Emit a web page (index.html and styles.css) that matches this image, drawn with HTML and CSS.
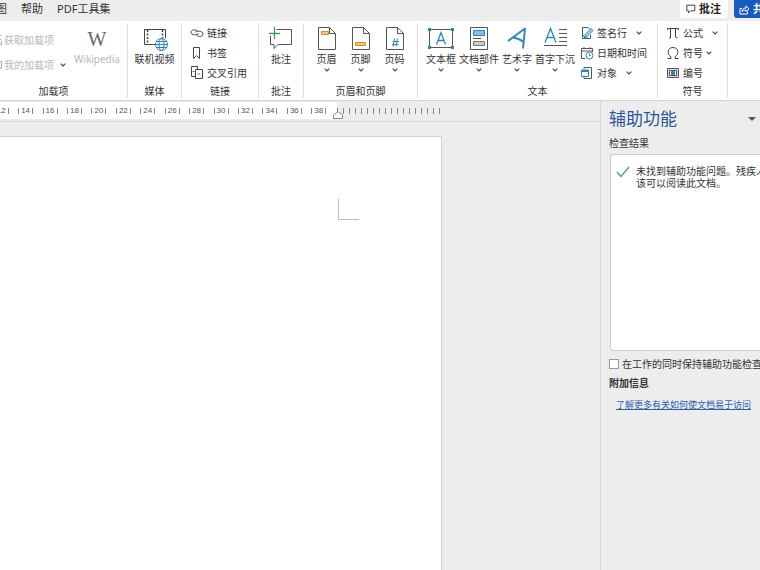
FILE: index.html
```html
<!DOCTYPE html>
<html lang="zh-CN">
<head>
<meta charset="utf-8">
<title>文档</title>
<link rel="stylesheet" href="styles.css">
</head>
<body>
<svg class="defs" aria-hidden="true">
  <symbol id="chev" viewBox="0 0 6 4"><path d="M.7 .7 3 3 5.300 .7" fill="none" stroke="#444" stroke-width="1.1"/></symbol>
</svg>
<header class="tabs">
  <nav class="tab-list">
    <a href="#view" class="tab-view">视图</a>
    <a href="#help">帮助</a>
    <a href="#pdf">PDF工具集</a>
  </nav>
  <button class="comments"><svg width="10" height="10" viewBox="0 0 10 10" fill="none" stroke="#444"><path d="M.8 1.2h8v5.6H4.6L2.6 8.8v-2H.8z"/></svg>批注</button>
  <button class="share"><svg width="11" height="11" viewBox="0 0 11 11" fill="none" stroke="#fff"><path d="M3 4.5H1v5.5h7.5V7.500M3 7.500c.3-2.500 1.500-3.500 4-3.500V1.800L10 5 7 7.500V6C5 6 4 6.500 3 7.500z"/></svg>共享</button>
</header>

<div class="ribbon">
  <section class="group g-addins">
    <div class="body">
      <div class="rows tall">
        <button class="cmd off"><svg class="cut" width="4" height="12" viewBox="0 0 4 12" fill="none" stroke="#aaa"><path d="M0 1.500h1.500M0 5.500h1M0 10.500h1.500V7"/></svg>获取加载项</button>
        <button class="cmd off"><svg class="cut" width="4" height="12" viewBox="0 0 4 12" fill="none" stroke="#aaa"><path d="M0 2.500h1.500v7H0"/></svg>我的加载项<svg class="chev far"><use href="#chev"/></svg></button>
      </div>
      <button class="big off"><span class="w">W</span>Wikipedia</button>
    </div>
    <h2>加载项</h2>
  </section>

  <section class="group g-media">
    <div class="body">
      <button class="big"><svg width="26" height="26" viewBox="0 0 26 26" fill="none" stroke="#444"><path d="M13 19.500H2.500v-15h21V13"/><path d="M5.500 5v14M20.500 5v8" stroke-dasharray="2 1.500" stroke-width="1.500"/><g stroke="#2787bd"><circle cx="19.500" cy="19.500" r="6" fill="#fff"/><ellipse cx="19.500" cy="19.500" rx="2.500" ry="6"/><path d="M13.500 19.500h12M14.500 16.500h10M14.500 22.500h10"/></g></svg>联机视频</button>
    </div>
    <h2>媒体</h2>
  </section>

  <section class="group g-links">
    <div class="body">
      <div class="rows">
        <button class="cmd"><svg width="14" height="14" viewBox="0 0 14 14" fill="none" stroke="#444"><path d="M8.500 7.200C8 9.500 1 9.500 1 6.500 1 3.500 5.500 3 7.200 5.200"/><path d="M5.300 6.500C6 4 13 5 13 8c0 3-4.500 3.200-6.300 1"/></svg>链接</button>
        <button class="cmd"><svg width="14" height="14" viewBox="0 0 14 14" fill="none" stroke="#444"><path d="M3.500 1.500h6v11l-3-3-3 3z"/></svg>书签</button>
        <button class="cmd"><svg width="14" height="14" viewBox="0 0 14 14" fill="none" stroke="#444"><path d="M5 10.500H1.500v-10h6V3"/><path d="M5.500 3.500h7v9h-7z" fill="#fff"/><path d="M2.500 5.500h2M7.500 8h3" stroke="#c4456d"/></svg>交叉引用</button>
      </div>
    </div>
    <h2>链接</h2>
  </section>

  <section class="group g-comment">
    <div class="body">
      <button class="big"><svg width="26" height="26" viewBox="0 0 26 26" fill="none" stroke="#555"><path d="M8.500 4.500h15v15H10l-4 4v-4H2.500V11"/><path d="M6.500 2v12M1 8.500h11" stroke="#35a35b" stroke-width="1.300"/></svg>批注</button>
    </div>
    <h2>批注</h2>
  </section>

  <section class="group g-header">
    <div class="body">
      <button class="big"><svg width="26" height="26" viewBox="0 0 26 26" fill="none" stroke="#555"><path d="M4.500 2.500h11l6 6v16h-17zM15.500 2.500v6h6"/><path d="M7.500 6.500h7v3h-7z" fill="#fbc86c" stroke="#d78b24"/></svg>页眉<svg class="chev"><use href="#chev"/></svg></button>
      <button class="big"><svg width="26" height="26" viewBox="0 0 26 26" fill="none" stroke="#555"><path d="M4.500 2.500h11l6 6v16h-17zM15.500 2.500v6h6"/><path d="M7.500 17.500h10v3h-10z" fill="#fbc86c" stroke="#d78b24"/></svg>页脚<svg class="chev"><use href="#chev"/></svg></button>
      <button class="big"><svg width="26" height="26" viewBox="0 0 26 26" fill="none" stroke="#555"><path d="M4.500 2.500h11l6 6v16h-17zM15.500 2.500v6h6"/><path d="m12.500 13.500-1.500 8M15.500 13.500l-1.500 8M10.500 16.500h6.500M10 19.500h6.500" stroke="#2787bd"/></svg>页码<svg class="chev"><use href="#chev"/></svg></button>
    </div>
    <h2>页眉和页脚</h2>
  </section>

  <section class="group g-text">
    <div class="body">
      <button class="big"><svg width="28" height="26" viewBox="0 0 28 26" fill="none" stroke="#555"><path d="M2.500 4.500h23v18h-23z"/><path d="M9.500 19.500 14 7.500l4.500 12M11 15.500h6" stroke="#2787bd" stroke-width="1.300"/><path d="M1 3h3v3H1zM24 3h3v3h-3zM1 21h3v3H1zM24 21h3v3h-3z" fill="#2787bd" stroke="none"/></svg>文本框<svg class="chev"><use href="#chev"/></svg></button>
      <button class="big"><svg width="26" height="26" viewBox="0 0 26 26" fill="none" stroke="#555"><path d="M4.500 2.500h17v22h-17z"/><path d="M7.500 5.500h11v5h-11z" fill="#83beec" stroke="#2787bd"/><path d="M7 13.500h8"/><path d="M7.500 16.500h11v4h-11z" fill="#ccc" stroke="#777"/></svg>文档部件<svg class="chev"><use href="#chev"/></svg></button>
      <button class="big"><svg width="26" height="26" viewBox="0 0 26 26" fill="none" stroke="#2787bd" stroke-width="1.900" stroke-linejoin="round"><path d="M4 16 21 3.500l-2 20M9 12.500c3 .5 7 1.500 10.500 4.500"/></svg>艺术字<svg class="chev"><use href="#chev"/></svg></button>
      <button class="big"><svg width="26" height="26" viewBox="0 0 26 26" fill="none" stroke="#555"><path d="m3 17.500 5.500-14 5.500 14M5 12.500h7" stroke="#2787bd" stroke-width="1.300"/><path d="M17 4.500h8M17 8.500h8M17 12.500h8M17 16.500h8M2 20.500h23"/></svg>首字下沉<svg class="chev"><use href="#chev"/></svg></button>
      <div class="rows">
        <button class="cmd"><svg width="14" height="14" viewBox="0 0 14 14" fill="none" stroke="#555"><path d="M8 1.500H2.500v11h8V9M8 1.500l2 2"/><path d="m4.500 11.500.7-3L11 2.500l2 2-6 6z" fill="#9fd0f0" stroke="#2787bd"/><path d="m3 9 2 3h3" stroke="#2787bd"/></svg>签名行<svg class="chev far"><use href="#chev"/></svg></button>
        <button class="cmd"><svg width="14" height="14" viewBox="0 0 14 14" fill="none" stroke="#555"><path d="M5 12.500H1.500v-10h11V6M1.500 5h11M4 1v2M10 1v2"/><circle cx="9.500" cy="9.500" r="3.500" fill="#fff" stroke="#2787bd"/><path d="M9.500 7.500v2H11" stroke="#2787bd"/></svg>日期和时间</button>
        <button class="cmd"><svg width="14" height="14" viewBox="0 0 14 14" fill="none" stroke="#555"><path d="M4 3V1.500h7.500v11H4V11"/><path d="M1.500 4h7v6.500h-7z" fill="#fff" stroke="#2787bd"/><path d="M1.500 5h7" stroke="#2787bd" stroke-width="2"/></svg>对象<svg class="chev far"><use href="#chev"/></svg></button>
      </div>
    </div>
    <h2>文本</h2>
  </section>

  <section class="group g-symbols">
    <div class="body">
      <div class="rows">
        <button class="cmd"><svg width="14" height="14" viewBox="0 0 14 14" fill="none" stroke="#444"><path d="M1.500 4V2.500h11V4M4.500 2.500v9.500H3M9.500 2.500v8.500q0 1 2 .8"/></svg>公式<svg class="chev far"><use href="#chev"/></svg></button>
        <button class="cmd"><svg width="14" height="14" viewBox="0 0 14 14" fill="none" stroke="#444"><path d="M1.500 12.500H5V11C.5 8 1.500 1.500 7 1.500s6.500 6.500 2 9.500v1.500h3.500"/></svg>符号<svg class="chev"><use href="#chev"/></svg></button>
        <button class="cmd"><svg width="14" height="14" viewBox="0 0 14 14" fill="none" stroke="#555"><path d="M1.500 2.500h11v9h-11z" fill="#ddd"/><path d="M3.500 4.500h7v5h-7z" fill="#fff"/><path d="M5.500 5.500h3v3h-3z" fill="#2787bd" stroke="#2787bd"/></svg>编号</button>
      </div>
    </div>
    <h2>符号</h2>
  </section>
</div>

<main class="work">
  <div class="canvas">
    <div class="ruler">
      <div class="scale"><span>12</span><span>14</span><span>16</span><span>18</span><span>20</span><span>22</span><span>24</span><span>26</span><span>28</span><span>30</span><span>32</span><span>34</span><span>36</span><span>38</span></div>
      <div class="ticks"></div>
      <svg class="indent" width="10" height="8" viewBox="0 0 10 8"><path d="M.5 7.500V4L5 .7 9.500 4v3.500z" fill="#fff" stroke="#888"/></svg>
    </div>
    <div class="page"><div class="corner"></div></div>
  </div>
  <aside class="pane">
    <div class="pane-head"><h1>辅助功能</h1><button class="menu" aria-label="任务窗格选项"></button></div>
    <h3>检查结果</h3>
    <div class="result">
      <svg width="14" height="12" viewBox="0 0 14 12"><path d="m1 6 4 4.500L13 1" fill="none" stroke="#46a567" stroke-width="1.300"/></svg>
      <p>未找到辅助功能问题。残疾人士应<br>该可以阅读此文档。</p>
    </div>
    <label class="keep"><input type="checkbox">在工作的同时保持辅助功能检查器运行</label>
    <h3 class="more">附加信息</h3>
    <a class="learn" href="#learn">了解更多有关如何使文档易于访问</a>
  </aside>
</main>
</body>
</html>
```
FILE: styles.css
```css
* { box-sizing: border-box; }
body {
  margin: 0;
  height: 100vh;
  display: flex;
  flex-direction: column;
  overflow: hidden;
  background: #ededed;
  color: #333;
  font: 10px/12px "Noto Sans", "Noto Sans CJK SC", sans-serif;
}
h1, h2, h3, p { margin: 0; font-size: inherit; font-weight: 400; }
button { margin: 0; padding: 0; border: 0; background: none; color: inherit; font: inherit; white-space: nowrap; }
svg { display: block; flex: none; }
.defs { position: absolute; width: 0; height: 0; }

/* Tab strip */
.tabs { display: flex; height: 21px; flex: none; font-size: 11px; line-height: 18px; overflow: hidden; }
.tab-list { display: flex; flex: 1; gap: 14px; white-space: nowrap; }
.tab-list a { color: #333; text-decoration: none; }
.tab-view { margin-left: -15px; }
.comments, .share { display: flex; align-items: center; height: 18px; font-weight: 700; border-radius: 0 0 3px 3px; }
.comments { gap: 3px; width: 48px; padding-left: 6px; background: #fff; color: #222; }
.share { gap: 3px; width: 26px; padding-left: 5px; margin-left: 6px; background: #185abd; color: #fff; overflow: hidden; border-radius: 0 0 0 3px; }

/* Ribbon */
.ribbon { display: flex; flex: none; height: 80px; padding-top: 2px; background: #fff; border-bottom: 1px solid #d2d2d2; overflow: hidden; }
.group { display: flex; flex-direction: column; flex: none; height: 75px; border-right: 1px solid #ddd; }
.group h2 { text-align: center; line-height: 16px; }
.body { display: flex; height: 60px; flex: none; }
.rows { display: flex; flex-direction: column; }
.tall { padding-top: 4px; }
.cmd { display: flex; align-items: center; gap: 3px; height: 20px; }
.tall .cmd { height: 25px; gap: 0; }
.big { display: flex; flex-direction: column; align-items: center; line-height: 18px; }
.big > svg:first-child { margin: 2px 0 -1px; }
.off { color: #b8b8b8; }
.w { height: 27px; font: 20px/32px "Liberation Serif", serif; color: #666; }
.chev { width: 6px; height: 4px; }
.far { margin-left: 6px; }
.g-addins { width: 128px; }
.g-addins h2 { padding-right: 20px; }
.g-addins .rows { width: 74px; }
.g-media { width: 54px; }
.g-media .body, .g-comment .body { justify-content: center; }
.g-links { width: 77px; }
.g-links .rows { padding-left: 8px; }
.g-comment { width: 45px; }
.g-header { width: 114px; }
.g-header .body { justify-content: center; gap: 8px; }
.g-text { width: 240px; }
.g-text .body { padding-left: 8px; gap: 3px; }
.g-text .rows { padding-left: 2px; }
.g-symbols { width: 70px; }
.g-symbols .rows { padding-left: 8px; }

/* Document area */
.work { display: flex; flex: 1; min-height: 0; }
.canvas { display: flex; flex-direction: column; flex: 1; min-width: 0; overflow: hidden; }
.ruler { position: relative; display: flex; flex: none; height: 21px; border-bottom: 1px solid #d8d8d8; }
.scale { display: grid; grid-template-columns: repeat(14, 1fr); width: 348px; height: 17px; margin: 1px 0 0 -11px; padding-right: 6px; background: #fff; font: 8px/8px "Liberation Sans", sans-serif; color: #555; }
.scale span { width: 15px; height: 6px; margin: 6px auto 0; border: solid #888; border-width: 0 1px; text-align: center; line-height: 6px; }
.ticks { width: 105px; height: 6px; margin-top: 7px; background: repeating-linear-gradient(90deg, #888 0 1px, transparent 1px 6px); }
.indent { position: absolute; left: 333px; top: 10px; }
.page { flex: 1; width: 442px; margin-top: 14px; padding: 62px 0 0 338px; background: #fff; border: solid #d0d0d0; border-width: 1px 1px 0 0; }
.corner { width: 21px; height: 21px; border: solid #bbb; border-width: 0 0 1px 1px; }

/* Accessibility pane */
.pane { width: 160px; flex: none; padding: 8px 0 0 8px; border-left: 1px solid #d8d8d8; overflow: hidden; white-space: nowrap; }
.pane-head { display: flex; align-items: center; justify-content: space-between; height: 20px; padding-right: 4px; }
.pane h1 { font-size: 17px; line-height: 20px; color: #2b579a; }
.menu { border: solid transparent; border-width: 4px 4px 0; border-top-color: #555; }
.pane h3 { margin-top: 7px; line-height: 14px; }
.result { display: flex; gap: 6px; height: 197px; margin: 4px 0 0 1px; padding: 10px 0 0 5px; background: #fff; border: 1px solid #ccc; border-right: 0; border-radius: 3px 0 0 3px; }
.result svg { margin-top: 1px; }
.keep { display: flex; align-items: center; gap: 3px; height: 14px; margin-top: 6px; }
.keep input { appearance: none; flex: none; width: 10px; height: 10px; margin: 0; border: 1px solid #999; background: #fff; }
.pane .more { margin-top: 5px; font-weight: 700; }
.learn { display: block; margin: 8px 0 0 7px; font-size: 9px; line-height: 14px; color: #2a5db0; }
```
